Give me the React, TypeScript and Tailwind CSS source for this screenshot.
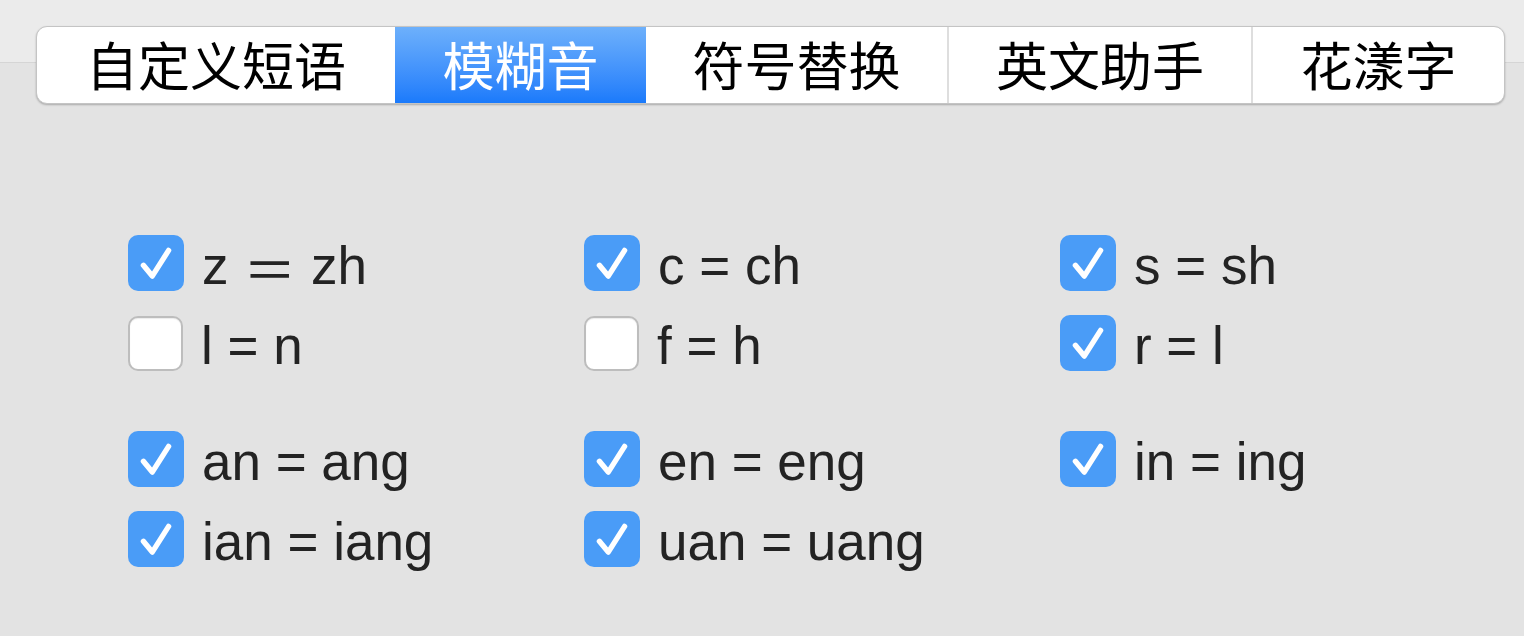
import { useState } from 'react';

type Item = { label: string; checked: boolean };

const tabs = [
  { name: '自定义短语', w: 'w-[358px]' },
  { name: '模糊音', w: 'w-[251px]' },
  { name: '符号替换', w: 'w-[301px]' },
  { name: '英文助手', w: 'w-[304px]' },
  { name: '花漾字', w: 'w-[253px]' },
];

const groupA: Item[] = [
  { label: 'z ＝ zh', checked: true },
  { label: 'c = ch', checked: true },
  { label: 's = sh', checked: true },
  { label: 'l = n', checked: false },
  { label: 'f = h', checked: false },
  { label: 'r = l', checked: true },
];

const groupB: Item[] = [
  { label: 'an = ang', checked: true },
  { label: 'en = eng', checked: true },
  { label: 'in = ing', checked: true },
  { label: 'ian = iang', checked: true },
  { label: 'uan = uang', checked: true },
];

// the full-width sign sits high in the CJK font, nudge it down to the x-height line
const Label = ({ text }: { text: string }) => {
  const parts = text.split('＝');
  if (parts.length === 1) return <>{text}</>;
  return (
    <>
      {parts[0]}
      <span className="inline-block translate-y-[6px]">＝</span>
      {parts[1]}
    </>
  );
};

const Check = ({ item, onToggle }: { item: Item; onToggle: () => void }) => (
  <label className="flex items-center h-[56px] cursor-pointer" onClick={onToggle}>
    {item.checked ? (
      <span className="w-[56px] h-[56px] rounded-[10px] bg-[#4a9cf7] flex items-center justify-center shrink-0">
        <svg viewBox="0 0 24 24" className="w-[56px] h-[56px]">
          <path d="M6.6 13 L10.4 17.6 L17.4 6.6" fill="none" stroke="white" strokeWidth="2.3" strokeLinecap="round" strokeLinejoin="round" />
        </svg>
      </span>
    ) : (
      <span className="w-[55px] h-[55px] rounded-[10px] bg-white border-2 border-[#bdbdbd] shadow-[inset_0_1px_1px_rgba(0,0,0,0.08)] shrink-0" />
    )}
    <span className="ml-[18px] pt-[4px] text-[53px] leading-none text-[#232323] font-['Liberation_Sans','Noto_Sans_CJK_SC',sans-serif] whitespace-pre">
      <Label text={item.label} />
    </span>
  </label>
);

const App = () => {
  const [active, setActive] = useState(1);
  const [a, setA] = useState(groupA);
  const [b, setB] = useState(groupB);

  const toggle = (list: Item[], set: (v: Item[]) => void, i: number) =>
    set(list.map((it, idx) => (idx === i ? { ...it, checked: !it.checked } : it)));

  return (
    <div className="w-[1524px] h-[636px] bg-[#e3e3e3] overflow-hidden">
      <div className="h-[63px] bg-[#ebebeb] border-b border-[#d5d5d5]" />

      {/* segmented tabs */}
      <div className="-mt-[37px] ml-[36px] w-[1469px] h-[78px] flex bg-white border border-[#c4c4c4] rounded-[11px] overflow-hidden shadow-[0_1px_2px_rgba(0,0,0,0.25)] font-['Noto_Sans_CJK_SC',sans-serif]">
        {tabs.map((t, i) => (
          <div
            key={t.name}
            onClick={() => setActive(i)}
            className={`${t.w} h-full flex items-center justify-center pb-[2px] text-[52px] font-normal leading-none cursor-pointer ${
              i === active
                ? 'bg-gradient-to-b from-[#6db0fb] to-[#1a7afb] text-white'
                : 'text-black'
            } ${i > active + 1 ? 'border-l-2 border-[#dedede]' : ''}`}
          >
            {t.name}
          </div>
        ))}
      </div>

      {/* options */}
      <div className="mt-[131px] ml-[128px]">
        <div className="grid grid-cols-[456px_476px_300px] gap-y-[24px]">
          {a.map((it, i) => (
            <Check key={it.label} item={it} onToggle={() => toggle(a, setA, i)} />
          ))}
        </div>
        <div className="mt-[60px] grid grid-cols-[456px_476px_300px] gap-y-[24px]">
          {b.map((it, i) => (
            <Check key={it.label} item={it} onToggle={() => toggle(b, setB, i)} />
          ))}
        </div>
      </div>
    </div>
  );
};

export default App;
